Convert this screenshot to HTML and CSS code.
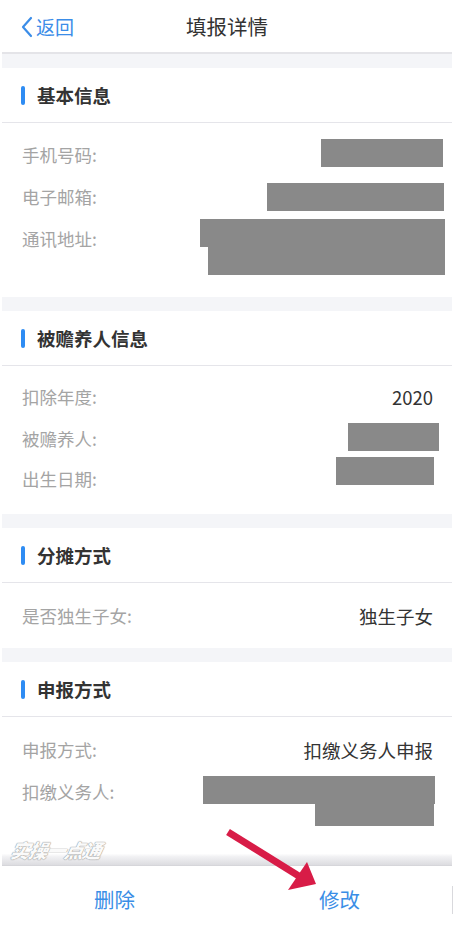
FILE: index.html
```html
<!DOCTYPE html>
<html lang="zh-CN">
<head>
<meta charset="utf-8">
<title>填报详情</title>
<link rel="stylesheet" href="styles.css">
</head>
<body>
<div class="page">
  <header class="nav">
    <a class="back">
      <svg class="chev" width="12" height="22" viewBox="0 0 12 22"><path d="M10 2 L2 11 L10 20" fill="none" stroke="#3b8de8" stroke-width="2.2" stroke-linecap="round" stroke-linejoin="round"/></svg>
      <span>返回</span>
    </a>
    <h1 class="title">填报详情</h1>
  </header>

  <div class="band"></div>
  <section class="card">
    <div class="card-head"><i class="mark"></i>基本信息</div>
    <div class="rows rows-1">
      <div class="row"><span class="label">手机号码:</span><div class="val"><i class="mask m-phone"></i></div></div>
      <div class="row"><span class="label">电子邮箱:</span><div class="val"><i class="mask m-mail"></i></div></div>
      <div class="row"><span class="label">通讯地址:</span><div class="val"><i class="mask m-addr1"></i><i class="mask m-addr2"></i></div></div>
    </div>
  </section>

  <div class="band"></div>
  <section class="card">
    <div class="card-head"><i class="mark"></i>被赡养人信息</div>
    <div class="rows rows-2">
      <div class="row"><span class="label">扣除年度:</span><div class="val"><span class="text">2020</span></div></div>
      <div class="row"><span class="label">被赡养人:</span><div class="val"><i class="mask m-name"></i></div></div>
      <div class="row"><span class="label">出生日期:</span><div class="val"><i class="mask m-birth"></i></div></div>
    </div>
  </section>

  <div class="band"></div>
  <section class="card">
    <div class="card-head"><i class="mark"></i>分摊方式</div>
    <div class="rows rows-3">
      <div class="row"><span class="label">是否独生子女:</span><div class="val"><span class="text">独生子女</span></div></div>
    </div>
  </section>

  <div class="band"></div>
  <section class="card">
    <div class="card-head"><i class="mark"></i>申报方式</div>
    <div class="rows rows-4">
      <div class="row"><span class="label">申报方式:</span><div class="val"><span class="text">扣缴义务人申报</span></div></div>
      <div class="row"><span class="label">扣缴义务人:</span><div class="val"><i class="mask m-agent1"></i><i class="mask m-agent2"></i></div></div>
    </div>
  </section>

  <div class="fade"></div>
  <footer class="bar">
    <button class="btn">删除</button>
    <button class="btn btn-edit">修改</button>
  </footer>

  <div class="watermark">实操一点通</div>
  <svg class="arrow" width="100" height="64" viewBox="0 0 100 64">
    <line x1="4" y1="4" x2="78" y2="50" stroke="#d81c47" stroke-width="7"/>
    <polygon points="92,56 64,62 83,34" fill="#d81c47"/>
  </svg>
</div>
</body>
</html>
```

FILE: styles.css
```css
* { box-sizing: border-box; margin: 0; padding: 0; }
html, body { background: #fff; }
body {
  font-family: "Noto Sans CJK SC", "Noto Sans", sans-serif;
  width: 454px;
  height: 933px;
  overflow: hidden;
}
.page {
  position: relative;
  padding: 0 2px;
  height: 933px;
  display: flex;
  flex-direction: column;
}
.nav {
  height: 54px;
  position: relative;
  display: flex;
  align-items: center;
  justify-content: center;
  border-bottom: 2px solid #e4e4e8;
}
.back {
  position: absolute;
  left: 19px;
  top: 14px;
  display: flex;
  align-items: center;
  gap: 3px;
  color: #3b8de8;
  font-size: 19px;
  line-height: 26px;
}
.chev { display: block; }
.title {
  font-size: 20.5px;
  font-weight: 400;
  color: #333;
  line-height: 28px;
}
.band {
  height: 14px;
  background: #f4f5f8;
}
.card { background: #fff; }
.card-head {
  height: 55px;
  display: flex;
  align-items: center;
  padding-left: 19px;
  font-size: 18.5px;
  font-weight: 700;
  color: #333;
  border-bottom: 1.5px solid #e5e5ea;
}
.mark {
  width: 4px;
  height: 19px;
  border-radius: 2px;
  background: #2e8cf3;
  margin-right: 12px;
}
.rows { padding: 18px 19px 22px 20px; }
.rows-2 { padding-top: 17px; padding-bottom: 21px; }
.rows-3 { padding-top: 19px; padding-bottom: 18px; }
.rows-4 { padding-top: 19px; padding-bottom: 20px; }
.row {
  display: flex;
  justify-content: space-between;
  align-items: flex-start;
  min-height: 42px;
}
.row:last-child { min-height: 28px; }
.rows-2 .row:nth-child(2) { min-height: 40px; }
.label {
  font-size: 17.5px;
  line-height: 28px;
  color: #a4a4a4;
  white-space: nowrap;
}
.val {
  display: flex;
  flex-direction: column;
  align-items: flex-end;
}
.text {
  font-size: 18.5px;
  line-height: 28px;
  color: #333;
}
.mask {
  display: block;
  background: #898989;
  height: 28px;
}
.m-phone { width: 122px; margin-top: -2px; margin-right: -10px; }
.m-mail { width: 177px; margin-right: -11px; }
.m-addr1 { width: 245px; margin-top: -6px; margin-right: -12px; }
.m-addr2 { width: 237px; margin-right: -12px; }
.m-name { width: 91px; margin-top: -2px; margin-right: -6px; }
.m-birth { width: 98px; margin-top: -8px; margin-right: -1px; }
.m-agent1 { width: 232px; margin-top: -2px; margin-right: -2px; }
.m-agent2 { width: 119px; height: 22px; margin-right: -1px; }
.fade {
  flex: 1;
  background: linear-gradient(to bottom, #fff 0%, #fff 40%, #f2f2f4 55%, #dcdce0 100%);
  border-bottom: 1px solid #d6d6da;
}
.bar {
  height: 67px;
  display: grid;
  grid-template-columns: 1fr 1fr;
  position: relative;
}
.bar::after {
  content: "";
  position: absolute;
  right: -1px;
  top: 20px;
  height: 28px;
  width: 1.5px;
  background: #d9d9dd;
}
.btn {
  border: 0;
  background: none;
  font-family: inherit;
  font-size: 20.5px;
  color: #3a8ee6;
  line-height: 28px;
  padding-bottom: 2px;
}
.watermark {
  position: absolute;
  left: 11px;
  top: 838px;
  font-size: 19px;
  font-weight: 900;
  font-style: italic;
  letter-spacing: -1px;
  color: #fafafa;
  transform: skewX(-12deg);
  text-shadow: 0 0 1px #8a8a8a, 0 0 1px #8a8a8a;
  line-height: 24px;
}
.arrow {
  position: absolute;
  left: 224px;
  top: 828px;
}
```
